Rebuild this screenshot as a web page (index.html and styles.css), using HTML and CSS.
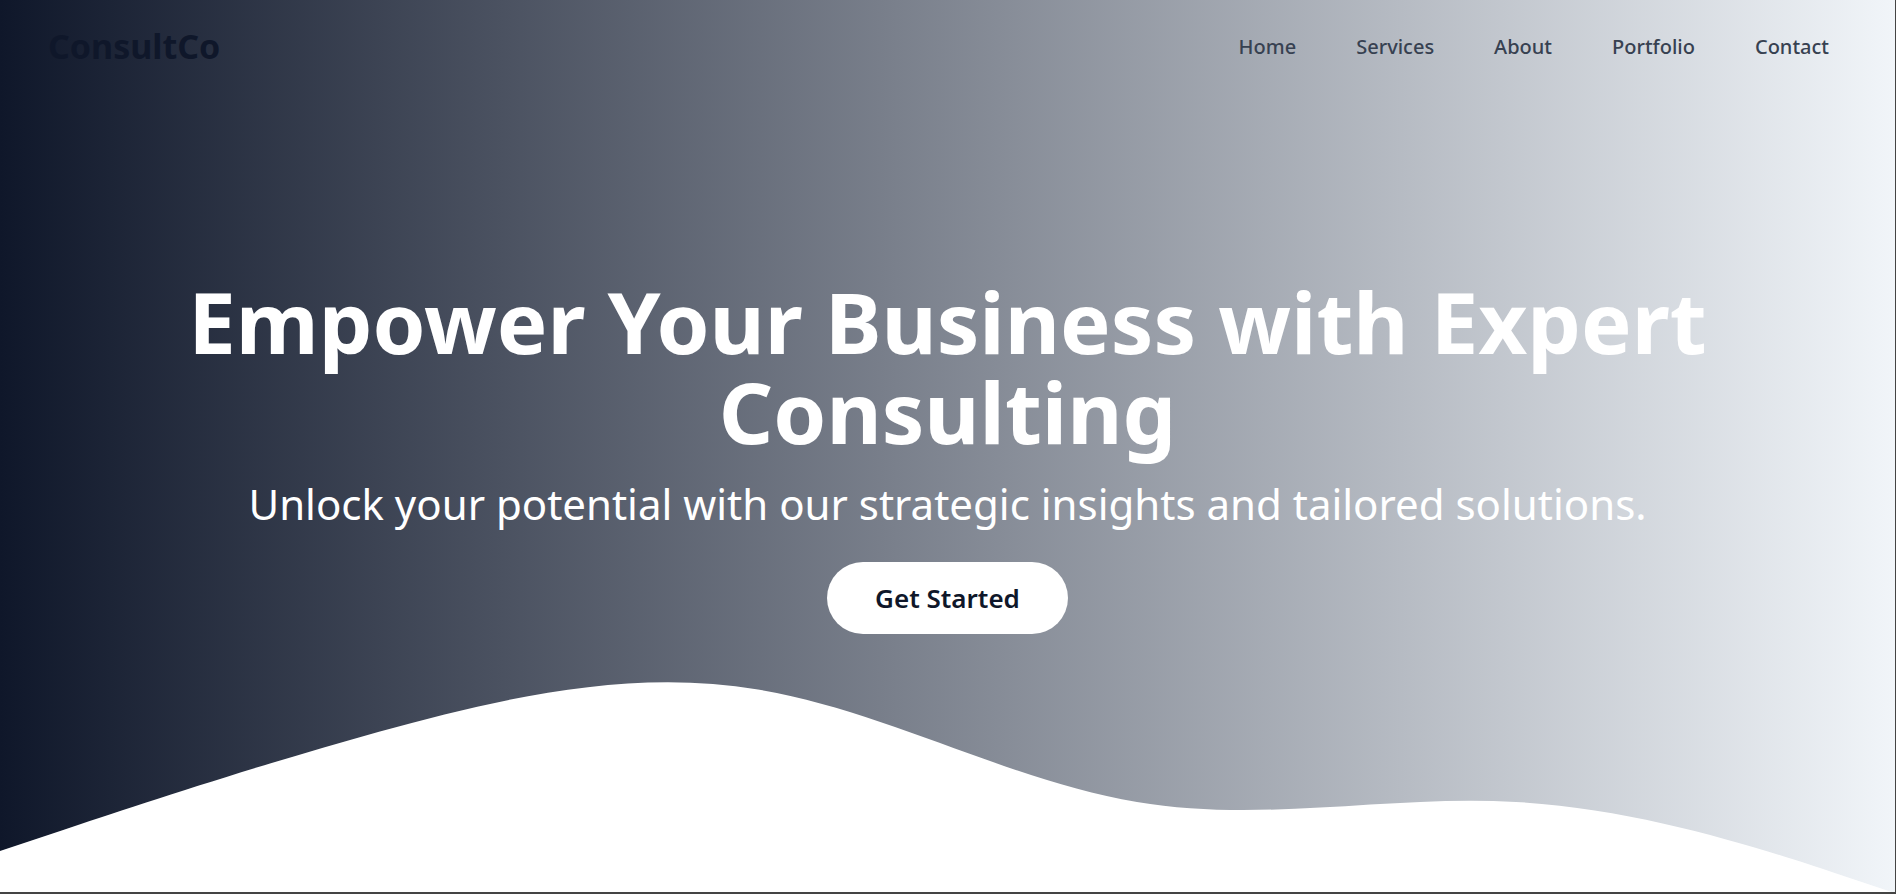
FILE: index.html
```html
<!DOCTYPE html>
<html lang="en">
<head>
<meta charset="utf-8">
<meta name="viewport" content="width=device-width, initial-scale=1">
<title>ConsultCo</title>
<link rel="stylesheet" href="styles.css">
</head>
<body>
<div class="page">
  <header class="header">
    <a class="logo" href="#">ConsultCo</a>
    <nav class="nav" aria-label="Main">
      <a href="#home">Home</a>
      <a href="#services">Services</a>
      <a href="#about">About</a>
      <a href="#portfolio">Portfolio</a>
      <a href="#contact">Contact</a>
    </nav>
  </header>
  <main class="hero">
    <h1 class="title">Empower Your Business with Expert Consulting</h1>
    <p class="subtitle">Unlock your potential with our strategic insights and tailored solutions.</p>
    <button class="cta" type="button">Get Started</button>
  </main>
  <svg class="wave" viewBox="0 0 1440 320" aria-hidden="true">
    <path fill="#ffffff" d="M0,288L48,272C96,256,192,224,288,197.3C384,171,480,149,576,165.3C672,181,768,235,864,250.7C960,267,1056,245,1152,250.7C1248,256,1344,288,1392,304L1440,320L0,320Z"/>
  </svg>
</div>
</body>
</html>
```
FILE: styles.css
```css
* {
  box-sizing: border-box;
}

body {
  margin: 0;
  font-family: "Segoe UI", "Noto Sans", "Open Sans", sans-serif;
}

.page {
  position: relative;
  display: flex;
  flex-direction: column;
  min-height: 100vh;
  overflow: hidden;
  border-right: 1px solid #444444;
  border-bottom: 2px solid #444444;
  background: linear-gradient(to right, #0f172a, #f1f5f9) padding-box;
}

.header {
  display: flex;
  align-items: center;
  justify-content: space-between;
  height: 92px;
  padding: 0 66px 0 48px;
}

.logo {
  color: #0f172a;
  font-size: 34px;
  font-weight: 700;
  text-decoration: none;
}

.nav {
  display: flex;
  gap: 60px;
}

.nav a {
  color: #374151;
  font-size: 20px;
  font-weight: 500;
  text-decoration: none;
}

.hero {
  position: relative;
  z-index: 1;
  display: flex;
  flex-direction: column;
  align-items: center;
  padding: 184px 160px 0;
  color: #ffffff;
  text-align: center;
}

.title {
  margin: 0;
  font-size: 85px;
  line-height: 90px;
  font-weight: 700;
}

.subtitle {
  margin: 20px 0 30px;
  font-size: 42px;
  line-height: 56px;
}

.cta {
  padding: 18px 48px;
  border: 0;
  border-radius: 36px;
  background: #ffffff;
  color: #0f172a;
  font-family: inherit;
  font-size: 26px;
  line-height: 36px;
  font-weight: 600;
  cursor: pointer;
}

.wave {
  position: absolute;
  bottom: -1px;
  left: 0;
  width: 100%;
}
```
